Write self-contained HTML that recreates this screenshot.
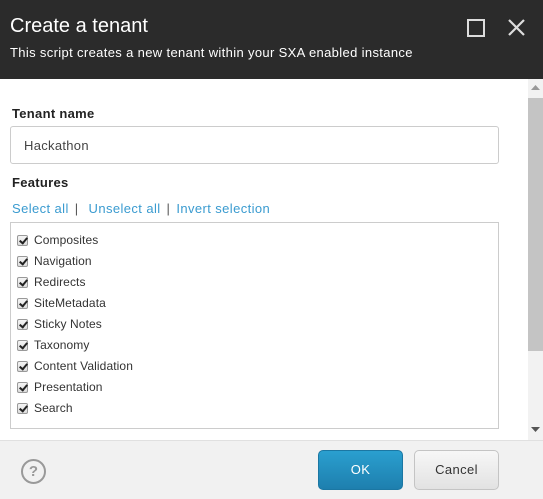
<!DOCTYPE html>
<html><head><style>
*{margin:0;padding:0;box-sizing:border-box}
body{width:543px;height:499px;overflow:hidden;font-family:"Liberation Sans",sans-serif;background:#fff;position:relative}
.hdr{position:absolute;left:0;top:0;width:543px;height:79px;background:#2b2b2b;color:#fff}
.t{position:absolute;left:10px;top:15px;font-size:20px}
.s{position:absolute;left:10px;top:45px;font-size:13px;letter-spacing:0.35px}
.lbl{position:absolute;left:12px;font-size:13px;font-weight:bold;color:#222;letter-spacing:0.3px}
.inp{position:absolute;left:10px;top:126px;width:489px;height:38px;border:1px solid #ccc;border-radius:3px;font-size:13px;color:#444;padding:11px 13px;letter-spacing:0.3px}
.links{position:absolute;left:12px;top:201px;font-size:13px;color:#3a9bd0;letter-spacing:0.4px}
.links span{color:#555;margin:0 6px}
.box{position:absolute;left:10px;top:222px;width:489px;height:207px;border:1px solid #ccc}
.it{position:absolute;left:6px;font-size:12px;color:#333;height:16px;line-height:16px;letter-spacing:0.1px}
.cb{display:inline-block;width:11px;height:11px;border:1px solid #999;border-radius:2px;background:linear-gradient(#f4f4f4,#ddd);vertical-align:-2px;margin-right:6px;position:relative}
.cb:after{content:"";position:absolute;left:3px;top:0px;width:3px;height:6px;border:solid #222;border-width:0 2px 2px 0;transform:rotate(40deg)}
.sb{position:absolute;left:528px;top:79px;width:15px;height:361px;background:#f2f2f2}
.th{position:absolute;left:528px;top:98px;width:15px;height:253px;background:#c4c4c4}
.ft{position:absolute;left:0;top:440px;width:543px;height:59px;background:#f1f1f1;border-top:1px solid #e0e0e0}
.btn{position:absolute;top:450px;height:40px;border-radius:5px;font-size:13px;text-align:center;line-height:38px;letter-spacing:0.4px}
.ok{left:318px;width:85px;background:linear-gradient(#2a9fcf,#1e7fae);color:#fff;border:1px solid #1b77a3}
.cn{left:414px;width:85px;background:linear-gradient(#f7f7f7,#e2e2e2);color:#333;border:1px solid #c4c4c4}
.help{position:absolute;left:21px;top:459px;width:25px;height:25px;border:2px solid #999;border-radius:50%;color:#999;font-weight:bold;font-size:15px;text-align:center;line-height:21px}
</style></head><body>
<div class="hdr"><div class="t">Create a tenant</div><div class="s">This script creates a new tenant within your SXA enabled instance</div>
<svg style="position:absolute;left:466px;top:17px" width="60" height="22"><rect x="2" y="3" width="16" height="16" fill="none" stroke="#ddd" stroke-width="2"/><path d="M43 3L58 18M58 3L43 18" stroke="#ddd" stroke-width="2.2"/></svg></div>
<div class="lbl" style="top:106px">Tenant name</div>
<div class="inp">Hackathon</div>
<div class="lbl" style="top:175px">Features</div>
<div class="links">Select all<span>|</span> Unselect all<span>|</span>Invert selection</div>
<div class="box">
<div class="it" style="top:9px"><i class="cb"></i>Composites</div>
<div class="it" style="top:30px"><i class="cb"></i>Navigation</div>
<div class="it" style="top:51px"><i class="cb"></i>Redirects</div>
<div class="it" style="top:72px"><i class="cb"></i>SiteMetadata</div>
<div class="it" style="top:93px"><i class="cb"></i>Sticky Notes</div>
<div class="it" style="top:114px"><i class="cb"></i>Taxonomy</div>
<div class="it" style="top:135px"><i class="cb"></i>Content Validation</div>
<div class="it" style="top:156px"><i class="cb"></i>Presentation</div>
<div class="it" style="top:177px"><i class="cb"></i>Search</div>
</div>
<div class="sb"></div><div class="th"></div>
<svg style="position:absolute;left:531px;top:85px" width="9" height="6"><path d="M0 5L4.5 0L9 5Z" fill="#999"/></svg>
<svg style="position:absolute;left:531px;top:427px" width="9" height="6"><path d="M0 0L4.5 5L9 0Z" fill="#555"/></svg>
<div class="ft"></div>
<div class="help">?</div>
<div class="btn ok">OK</div><div class="btn cn">Cancel</div>
</body></html>
